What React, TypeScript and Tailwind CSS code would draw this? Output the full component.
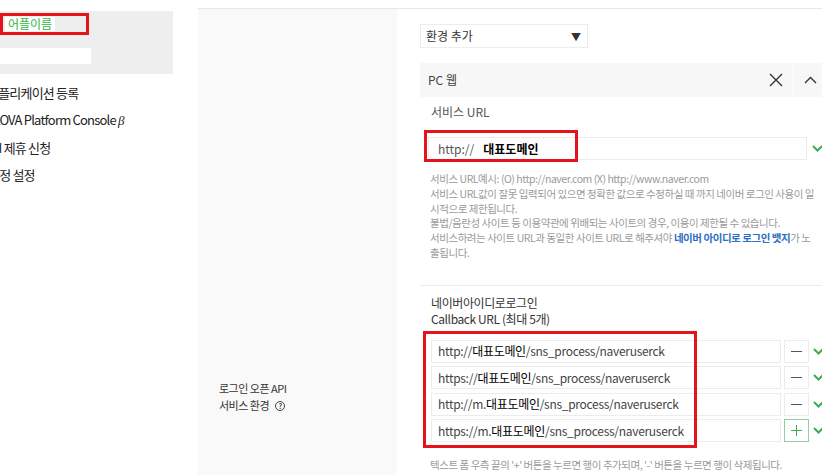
import { useState } from 'react'

const font = { fontFamily: '"Noto Sans CJK KR", "Noto Sans", sans-serif' }

const Check = () => (
  <svg width="11" height="7" viewBox="0 0 11 7" className="shrink-0">
    <path d="M1 1l4.5 4.5L10 1" fill="none" stroke="#3dae4f" strokeWidth="2" />
  </svg>
)

const callbacks = [
  { pre: 'http://', tail: '/sns_process/naveruserck', add: false },
  { pre: 'https://', tail: '/sns_process/naveruserck', add: false },
  { pre: 'http://m.', tail: '/sns_process/naveruserck', add: false },
  { pre: 'https://m.', tail: '/sns_process/naveruserck', add: true },
]

const Sidebar = () => (
  <aside className="w-[198px] shrink-0 overflow-hidden pt-[11px]">
    <div className="w-[173px] h-[63px] bg-[#eeeeee] pt-[2px]">
      <div className="w-[89px] h-[22px] border-[3px] border-[#e3141c] flex items-center pl-[2px]">
        <span className="bg-white px-[3px] text-[12px] leading-[14px] text-[#2fb43e]">어플이름</span>
      </div>
      <div className="mt-[13px] w-[91px] h-[16px] bg-white" />
    </div>
    <ul className="mt-[10px] flex flex-col gap-[9px] text-[13px] leading-[18px] text-[#222] tracking-[-0.8px] whitespace-nowrap">
      <li className="-ml-[13px]">애플리케이션 등록</li>
      <li className="-ml-[14px]">CLOVA Platform Console <i className="font-serif">β</i></li>
      <li className="-ml-[16px]">API 제휴 신청</li>
      <li className="-ml-[12px]">계정 설정</li>
    </ul>
  </aside>
)

const HelpText = () => (
  <div className="mt-[12px] pl-[10px] text-[10.5px] leading-[14.8px] text-[#9a9a9a] tracking-[-0.45px] whitespace-nowrap">
    <p>서비스 URL예시: (O) http://naver.com (X) http://www.naver.com</p>
    <p>서비스 URL값이 잘못 입력되어 있으면 정확한 값으로 수정하실 때 까지 네이버 로그인 사용이 일</p>
    <p>시적으로 제한됩니다.</p>
    <p>불법/음란성 사이트 등 이용약관에 위배되는 사이트의 경우, 이용이 제한될 수 있습니다.</p>
    <p>
      서비스하려는 사이트 URL과 동일한 사이트 URL로 해주셔야{' '}
      <span className="text-[#2f6fc4] font-bold">네이버 아이디로 로그인 뱃지</span>가 노
    </p>
    <p>출됩니다.</p>
  </div>
)

export default function App() {
  const [open] = useState(true)

  return (
    <div style={font} className="w-[822px] h-[475px] overflow-hidden flex bg-white">
      <Sidebar />

      <main className="flex-1 min-w-0 flex flex-col">
        <div className="h-[9px] shrink-0 border-b border-[#e8e8e8]" />

        <div className="flex flex-1 min-h-0">
          {/* row label */}
          <div className="w-[199px] shrink-0 bg-[#f9f9f9] pl-[21px] pt-[371px] text-[11px] leading-[17px] text-[#333] tracking-[-0.5px]">
            <p>로그인 오픈 API</p>
            <p className="flex items-center gap-[6px]">
              서비스 환경
              <span className="w-[10px] h-[10px] rounded-full border border-[#444] text-[7px] leading-[8px] flex items-center justify-center font-bold">
                ?
              </span>
            </p>
          </div>

          {/* row content */}
          <div className="flex-1 pl-[23px] pt-[15px] overflow-hidden">
            <div className="w-[168px] h-[24px] border border-[#ececec] flex items-center justify-between pl-[5px] pr-[6px] text-[12px] text-[#333]">
              <span>환경 추가</span>
              <span className="text-[10px]">▼</span>
            </div>

            <section className="mt-[15px] w-[414px]">
              <header className="h-[34px] flex bg-[#f7f7f7]">
                <div className="w-[373px] flex items-center justify-between pl-[8px] pr-[10px] text-[12px] text-[#444]">
                  <span>PC 웹</span>
                  <svg width="14" height="14" viewBox="0 0 14 14">
                    <path d="M1 1l12 12M13 1L1 13" stroke="#333" strokeWidth="1.4" />
                  </svg>
                </div>
                <div className="w-[41px] border-l border-white flex items-center pl-[10px]">
                  <svg width="13" height="8" viewBox="0 0 13 8">
                    <path d={open ? 'M1 7l5.5-5.5L12 7' : 'M1 1l5.5 5.5L12 1'} fill="none" stroke="#333" strokeWidth="1.4" />
                  </svg>
                </div>
              </header>

              <div className="border-b border-[#ececec] pb-[24px]">
                <p className="pt-[7px] pl-[11px] text-[12px] leading-[16px] text-[#555]">서비스 URL</p>

                <div className="mt-[17px] flex items-center gap-[5px]">
                  <div className="relative ml-[8px] w-[379px] h-[23px] border border-[#ececec] flex items-center pl-[9px] text-[12px]">
                    <span className="text-[#555] pr-[9px]">http://</span>
                    <span className="font-bold text-black">대표도메인</span>
                    <div className="absolute -left-[5px] -top-[8px] w-[154px] h-[32px] border-[3px] border-[#e3141c]" />
                  </div>
                  <Check />
                </div>

                <HelpText />
              </div>

              <p className="mt-[9px] pl-[11px] text-[12px] leading-[16px] text-[#333] tracking-[-0.4px]">
                네이버아이디로로그인
                <br />
                Callback URL (최대 5개)
              </p>

              <div className="relative mt-[13px] flex flex-col gap-[3.5px]">
                {callbacks.map((c) => (
                  <div key={c.pre} className="flex items-center">
                    <div className="ml-[11px] w-[350px] h-[23px] border border-[#ececec] flex items-center pl-[6px] text-[12px] text-[#444] tracking-[-0.3px] whitespace-nowrap">
                      <span>{c.pre}</span>
                      <span className="text-black">대표도메인</span>
                      <span>{c.tail}</span>
                    </div>
                    <button
                      className={
                        'ml-[3px] w-[25px] h-[23px] flex items-center justify-center border ' +
                        (c.add ? 'border-[#8fd19a] text-[#3dae4f]' : 'border-[#ececec] text-[#555]')
                      }
                    >
                      <svg width="11" height="11" viewBox="0 0 11 11">
                        <path d={c.add ? 'M0 5.5h11M5.5 0v11' : 'M0 5.5h11'} stroke="currentColor" strokeWidth="1" />
                      </svg>
                    </button>
                    <span className="ml-[4px]">
                      <Check />
                    </span>
                  </div>
                ))}
                <div className="absolute left-[3px] -top-[9px] w-[274px] h-[117px] border-[3px] border-[#e3141c]" />
              </div>

              <p className="mt-[15px] pl-[10px] text-[10.5px] leading-[15px] text-[#9a9a9a] tracking-[-0.45px] whitespace-nowrap">
                텍스트 폼 우측 끝의 '+' 버튼을 누르면 행이 추가되며, '-' 버튼을 누르면 행이 삭제됩니다.
              </p>
              <p className="pl-[10px] text-[10.5px] leading-[15px] text-[#9a9a9a] tracking-[-0.45px] whitespace-nowrap">
                네이버 아이디로 로그인 후 등록한 Callback URL 중 하나로 이동합니다.
              </p>
            </section>
          </div>
        </div>
      </main>
    </div>
  )
}
